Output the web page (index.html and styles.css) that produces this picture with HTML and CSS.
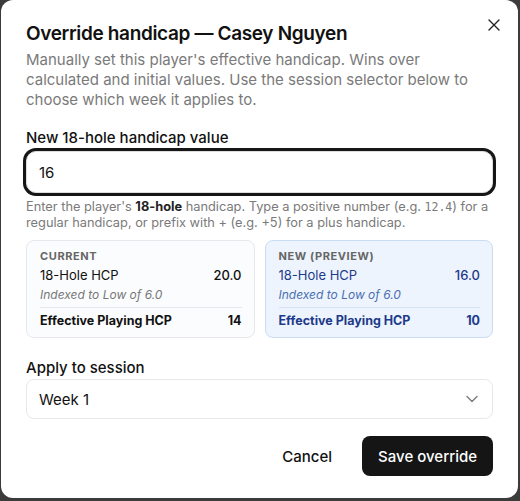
FILE: index.html
```html
<!DOCTYPE html>
<html lang="en">
<head>
	<meta charset="UTF-8">
	<title>Override handicap</title>
	<link rel="stylesheet" href="styles.css">
</head>
<body>
	<div class="dialog">
		<button class="close" type="button" aria-label="Close">
			<svg width="12" height="12" viewBox="0 0 12 12"><path d="M1 1L11 11M11 1L1 11" stroke="#222" stroke-width="1.4" stroke-linecap="round"/></svg>
		</button>
		<h2 class="title">Override handicap — Casey Nguyen</h2>
		<p class="desc">Manually set this player's effective handicap. Wins over calculated and initial values. Use the session selector below to choose which week it applies to.</p>

		<label class="label" for="hcp">New 18-hole handicap value</label>
		<div class="input-wrap">
			<input id="hcp" class="input" type="text" value="16">
		</div>
		<p class="help">Enter the player's <b>18-hole</b> handicap. Type a positive number (e.g. <code>12.4</code>) for a regular handicap, or prefix with + (e.g. +5) for a plus handicap.</p>

		<div class="compare">
			<div class="card">
				<div class="card-head">Current</div>
				<div class="row"><span>18-Hole HCP</span><span class="num">20.0</span></div>
				<div class="note">Indexed to Low of 6.0</div>
				<div class="row total"><span>Effective Playing HCP</span><span>14</span></div>
			</div>
			<div class="card preview">
				<div class="card-head">New (preview)</div>
				<div class="row"><span>18-Hole HCP</span><span class="num">16.0</span></div>
				<div class="note">Indexed to Low of 6.0</div>
				<div class="row total"><span>Effective Playing HCP</span><span>10</span></div>
			</div>
		</div>

		<label class="label session-label" for="session">Apply to session</label>
		<div class="select">
			<span>Week 1</span>
			<svg width="12" height="8" viewBox="0 0 12 8"><path d="M1 1.5L6 6.5L11 1.5" fill="none" stroke="#777" stroke-width="1.3" stroke-linecap="round" stroke-linejoin="round"/></svg>
		</div>

		<div class="actions">
			<button class="btn cancel" type="button">Cancel</button>
			<button class="btn save" type="button">Save override</button>
		</div>
	</div>
</body>
</html>
```

FILE: styles.css
```css
body{
	margin:0;
	padding:0;
	background:#3b3b3b;
	font-family:"Inter","Noto Sans",sans-serif;
	color:#111;
}
.dialog{
	position:relative;
	box-sizing:border-box;
	width:517px;
	height:498px;
	margin-left:1px;
	background:#fff;
	border-radius:12px;
	padding:20px 25px 0 25px;
}
.close{
	position:absolute;
	top:18px;
	right:17px;
	border:0;
	background:none;
	padding:0;
	width:14px;
	height:14px;
	display:flex;
	align-items:center;
	justify-content:center;
}
.title{
	margin:0;
	font-size:19px;
	font-weight:600;
	line-height:28px;
	letter-spacing:-0.35px;
}
.desc{
	margin:2px 0 0 0;
	font-size:15px;
	line-height:20px;
	color:#7a7a7a;
}
.label{
	display:block;
	margin-top:18px;
	font-size:15px;
	font-weight:500;
	line-height:20px;
}
.input-wrap{
	margin-top:3px;
}
.input{
	box-sizing:border-box;
	width:100%;
	height:42px;
	border:1px solid #ddd;
	border-radius:10px;
	box-shadow:0 0 0 3px #161616;
	padding:0 12px;
	font-family:inherit;
	font-size:15px;
	color:#111;
	outline:none;
}
.help{
	margin:6px 0 0 0;
	font-size:12.8px;
	line-height:16px;
	color:#7a7a7a;
}
.help b{
	color:#222;
}
.help code{
	font-family:"DejaVu Sans Mono",monospace;
	font-size:11.5px;
}
.compare{
	display:grid;
	grid-template-columns:1fr 1fr;
	gap:10px;
	margin-top:9px;
}
.card{
	border:1px solid #e6e8ec;
	border-radius:8px;
	background:#fbfcfd;
	padding:8px 12px 6px 13px;
}
.card-head{
	font-size:11px;
	font-weight:700;
	text-transform:uppercase;
	letter-spacing:0.6px;
	color:#666;
	line-height:14px;
}
.row{
	display:flex;
	justify-content:space-between;
	font-size:13px;
	line-height:20px;
	margin-top:2px;
}
.row .num{
	font-weight:500;
}
.note{
	font-size:12px;
	font-style:italic;
	color:#777;
	line-height:18px;
	margin-top:1px;
}
.total{
	margin-top:3px;
	padding-top:3px;
	border-top:1px solid #e6e8ec;
	font-size:12.5px;
	font-weight:700;
}
.preview{
	background:#edf4fd;
	border-color:#c9dcf4;
	color:#1e3a8a;
}
.preview .card-head{
	color:#666;
}
.preview .note{
	color:#4a6fb0;
}
.preview .total{
	border-color:#d4e2f5;
}
.session-label{
	margin-top:20px;
}
.select{
	display:flex;
	align-items:center;
	justify-content:space-between;
	box-sizing:border-box;
	height:40px;
	margin-top:1px;
	padding:0 14px 0 12px;
	border:1px solid #e6e8ec;
	border-radius:8px;
	font-size:15px;
}
.actions{
	display:flex;
	justify-content:flex-end;
	align-items:center;
	gap:12px;
	margin-top:17px;
}
.btn{
	font-family:inherit;
	font-size:15px;
	font-weight:500;
	border:0;
	height:40px;
	border-radius:8px;
	padding:0 16px;
}
.cancel{
	background:none;
	color:#111;
	padding:0 18px;
}
.save{
	background:#151515;
	color:#fff;
}
```
